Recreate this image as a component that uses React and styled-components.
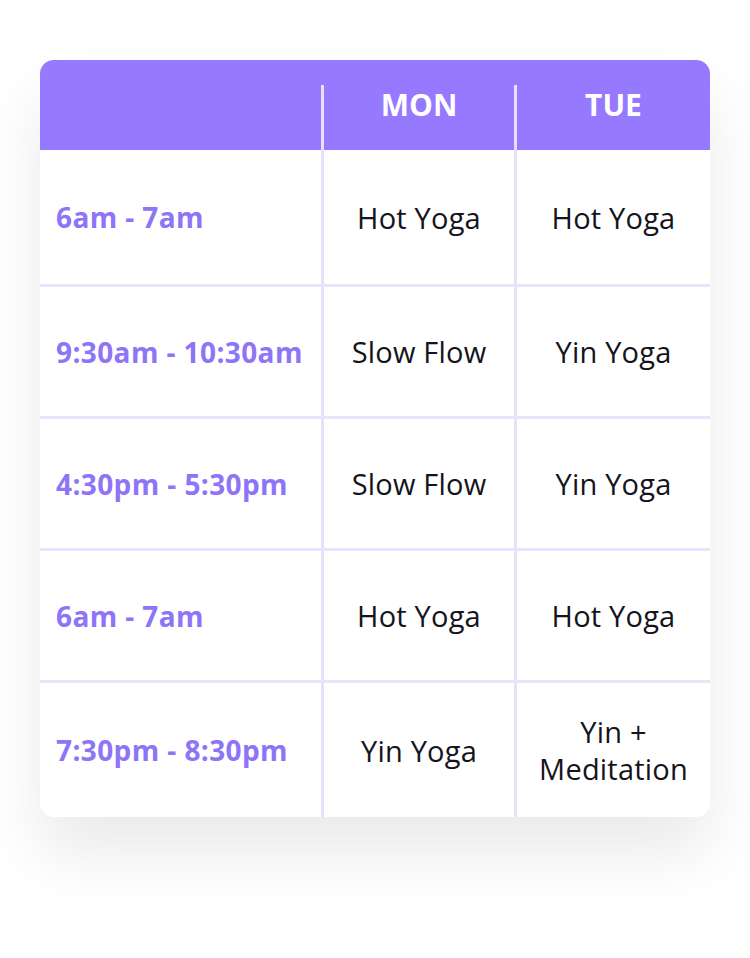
import styled, { createGlobalStyle } from "styled-components"

const rows = [
  { time: "6am - 7am", mon: "Hot Yoga", tue: "Hot Yoga", h: 137 },
  { time: "9:30am - 10:30am", mon: "Slow Flow", tue: "Yin Yoga", h: 132 },
  { time: "4:30pm - 5:30pm", mon: "Slow Flow", tue: "Yin Yoga", h: 132 },
  { time: "6am - 7am", mon: "Hot Yoga", tue: "Hot Yoga", h: 132 },
  { time: "7:30pm - 8:30pm", mon: "Yin Yoga", tue: "Yin + Meditation", h: 134 },
]

const GlobalStyle = createGlobalStyle`
  body {
    margin: 0;
    background: #ffffff;
    font-family: "Open Sans", "Liberation Sans", sans-serif;
  }
`

const App = () => {
  return (
    <Page>
      <GlobalStyle />
      <Card>
        <HeaderRow>
          <HeadCell />
          <HeadCell $divider>MON</HeadCell>
          <HeadCell $divider>TUE</HeadCell>
        </HeaderRow>
        {rows.map((row, i) => (
          <Row key={i} $h={row.h} $last={i === rows.length - 1}>
            <TimeCell>{row.time}</TimeCell>
            <ClassCell>{row.mon}</ClassCell>
            <ClassCell>{row.tue}</ClassCell>
          </Row>
        ))}
      </Card>
    </Page>
  )
}

const Page = styled.div`
  padding: 60px 40px 140px;
`

const Card = styled.div`
  width: 670px;
  background: #fff;
  border-radius: 14px;
  overflow: hidden;
  box-shadow: 0 36px 64px rgba(0, 0, 0, 0.085);
`

const HeaderRow = styled.div`
  display: grid;
  grid-template-columns: 281px 193px 196px;
  height: 90px;
  padding-top: 25px;
  box-sizing: border-box;
  background: #9579ff;
`

const HeadCell = styled.div`
  border-left: ${(p) => (p.$divider ? "3px solid #e6e0fd" : "none")};
  color: #fff;
  font-weight: 700;
  font-size: 30px;
  text-align: center;
  line-height: 40px;
`

const Row = styled.div`
  display: grid;
  grid-template-columns: 281px 193px 196px;
  height: ${(p) => p.$h}px;
  border-bottom: ${(p) => (p.$last ? "none" : "3px solid #e8e4fc")};
  box-sizing: border-box;
`

const TimeCell = styled.div`
  display: flex;
  align-items: center;
  padding-left: 16px;
  color: #8e74f6;
  font-weight: 700;
  font-size: 28px;
  letter-spacing: 0.4px;
  white-space: nowrap;
`

const ClassCell = styled.div`
  display: flex;
  align-items: center;
  justify-content: center;
  text-align: center;
  padding: 0 14px;
  border-left: 3px solid #e6e0fd;
  color: #14141c;
  font-weight: 500;
  font-size: 29px;
  letter-spacing: 0.2px;
  line-height: 37px;
`

export default App
